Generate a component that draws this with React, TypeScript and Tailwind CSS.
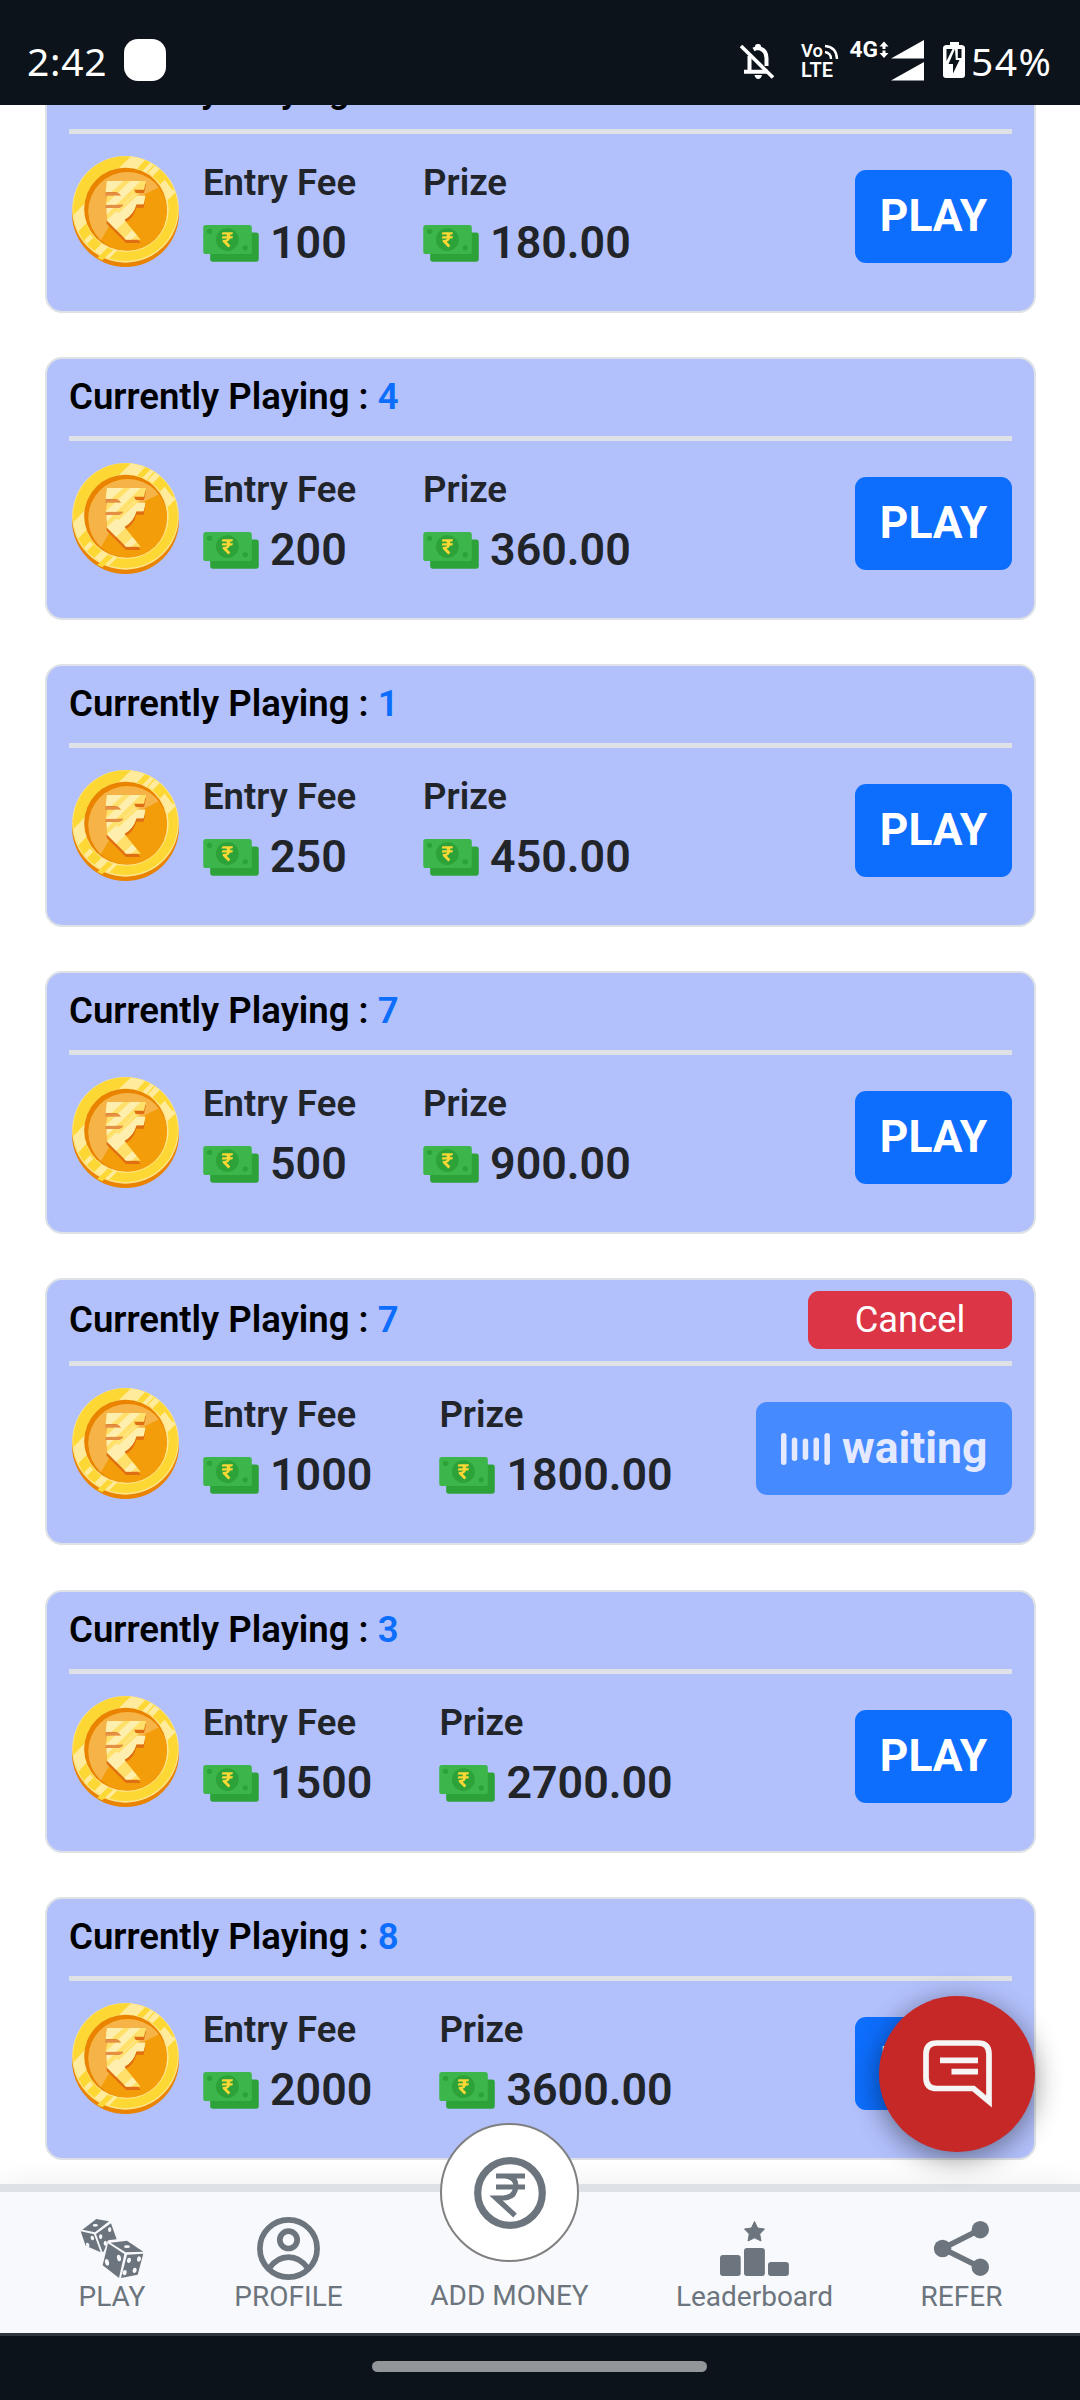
import React from "react";

type Game = { playing: number; fee: string; prize: string; waiting?: boolean };

const games: Game[] = [
  { playing: 2, fee: "100", prize: "180.00" },
  { playing: 4, fee: "200", prize: "360.00" },
  { playing: 1, fee: "250", prize: "450.00" },
  { playing: 7, fee: "500", prize: "900.00" },
  { playing: 7, fee: "1000", prize: "1800.00", waiting: true },
  { playing: 3, fee: "1500", prize: "2700.00" },
  { playing: 8, fee: "2000", prize: "3600.00" },
];

const RUPEE =
  "M139 114H256L250 140H220Q226 147 227 158H254L249 184H227Q219 216 191 230L240 290H196L138 232V195H176Q186 193 189 185H135L140 158H182Q177 149 166 147H135Z";

function Coin() {
  return (
    <svg viewBox="34 39 321 333" className="h-[111px] w-[107px] shrink-0">
      <defs>
        <clipPath id="coin-face">
          <circle cx="194.500" cy="197" r="157" />
        </clipPath>
        <clipPath id="coin-inner">
          <circle cx="201" cy="205" r="118" />
        </clipPath>
        <clipPath id="coin-rupee">
          <path d={RUPEE} />
        </clipPath>
      </defs>
      <ellipse cx="194.500" cy="211" rx="160.500" ry="161" fill="#e98300" />
      <circle cx="194.500" cy="199" r="160" fill="#fee58b" />
      <circle cx="194.500" cy="197" r="157" fill="#fdd835" />
      <g clipPath="url(#coin-face)" fill="#ffeb9b">
        <path d="M165 85L215 36L262 42L30 290V225Z" />
        <path d="M262 90L290 60L303 72L276 100Z" />
        <path d="M245 84L276 52L286 58L258 90Z" />
        <path d="M352 140L120 372L80 345L312 110L335 140Z" />
        <path d="M72 290L88 274L98 284L76 306Z" />
      </g>
      <path d="M110 345L145 310L160 318L125 352Z" fill="#fdd835" />
      <path d="M60 275L78 257L88 272L68 292Z" fill="#fdd835" />
      <circle cx="197" cy="200" r="127" fill="#ffe791" />
      <circle cx="194.500" cy="198" r="124" fill="#e98300" />
      <circle cx="201" cy="205" r="118" fill="#f49d0b" />
      <g clipPath="url(#coin-inner)">
        <path d="M80 80H310V125L180 190L110 310L80 290Z" fill="#f6b348" />
      </g>
      <path d={RUPEE} transform="translate(0 10)" fill="#df6f12" />
      <path d="M135 148H166Q178 150 181 158H135ZM135 186H189L178 195H135Z" fill="#e48f43" />
      <path d={RUPEE} fill="#ffe06b" />
      <g clipPath="url(#coin-rupee)" fill="#ffefae">
        <path d="M139 108H195L130 166Z" />
        <path d="M215 108H246L130 222V190Z" />
        <path d="M262 140L262 170L150 276L130 240L225 150Z" />
        <path d="M185 290L215 262L228 276L200 300Z" />
      </g>
      <path d="M166 207L228 150L236 152L174 210Z" fill="#ffe06b" />
    </svg>
  );
}

function Cash() {
  return (
    <svg viewBox="429 247 168 112" className="h-[37px] w-[56px] shrink-0">
      <rect x="450" y="270" width="147" height="88" rx="8" fill="#2ca238" />
      <rect x="429" y="247" width="147" height="88" rx="8" fill="#3cb54a" />
      <circle cx="502" cy="291" r="34.500" fill="#2ca238" />
      <circle cx="448" cy="266" r="8" fill="#2ca238" />
      <circle cx="556" cy="316" r="8" fill="#2ca238" />
      <path
        d="M487 269H519L517 276H510L511 281H519L517 288H510Q508 295 500 298L511 309L505 315L488 298V292Q500 293 502 288H485L487 281H501L499 276H485Z"
        fill="#fdd835"
      />
    </svg>
  );
}

function Amount({ label, value }: { label: string; value: string }) {
  return (
    <div className="flex flex-col text-[#212529]">
      <span className="text-[36.560px] leading-[44px] font-semibold">{label}</span>
      <div className="mt-[12px] flex h-[52px] items-center">
        <Cash />
        <span className="ml-[11px] text-[44.800px] leading-[52px] font-semibold">{value}</span>
      </div>
    </div>
  );
}

function GameCard({ game }: { game: Game }) {
  const size = game.waiting ? "h-[267px] mb-[45px]" : "h-[263px] mb-[44px]";
  const head = game.waiting ? "h-[81px]" : "h-[77px]";
  return (
    <section
      className={`${size} flex shrink-0 flex-col rounded-[17px] border-2 border-[#dee2e6] bg-[#b2c0fc] px-[22px]`}
    >
      <div className={`${head} flex shrink-0 items-center justify-between pb-[2px]`}>
        <h2 className="text-[36.560px] leading-[44px] font-semibold whitespace-pre text-black">
          Currently Playing : <span className="text-[#0d6efd]">{game.playing}</span>
        </h2>
        {game.waiting && (
          <button className="mt-[1px] h-[58px] w-[204px] rounded-[11px] bg-[#dc3545] text-[36.300px] leading-[56px] text-white">
            Cancel
          </button>
        )}
      </div>
      <div className="h-[5px] shrink-0 bg-[#dee2e6]" />
      <div className="flex items-start pt-[22px] pl-[3px]">
        <Coin />
        <div className="mt-[5px] ml-[24px] flex gap-[67px]">
          <Amount label="Entry Fee" value={game.fee} />
          <Amount label="Prize" value={game.prize} />
        </div>
        {game.waiting ? (
          <button className="mt-[14px] ml-auto flex h-[93px] w-[256px] items-center rounded-[11px] bg-[#468aff] pl-[25px] text-[#e4e9ff]">
            <svg viewBox="0 0 49 32" className="h-[32px] w-[49px]" fill="currentColor">
              <rect x="0" y="0" width="5.500" height="32" rx="2.700" />
              <rect x="10.800" y="4.500" width="5.500" height="23.500" rx="2.700" />
              <rect x="21.700" y="5.500" width="5.500" height="21.500" rx="2.700" />
              <rect x="32.500" y="4.500" width="5.500" height="23.500" rx="2.700" />
              <rect x="43.400" y="0" width="5.500" height="32" rx="2.700" />
            </svg>
            <span className="ml-[12px] pb-[2px] text-[44.500px] leading-[50px] font-bold">waiting</span>
          </button>
        ) : (
          <button className="mt-[14px] ml-auto h-[93px] w-[157px] rounded-[11px] bg-[#0d6efd] pb-[1px] text-[44.300px] leading-[50px] font-bold text-white">
            PLAY
          </button>
        )}
      </div>
    </section>
  );
}

function StatusBar() {
  return (
    <header className="relative z-10 flex h-[105px] shrink-0 items-start bg-[#0c131a] text-white">
      <span className="mt-[34px] ml-[27px] w-[97px] font-['Noto_Sans',sans-serif] text-[39px] leading-[54px] tracking-[0.700px]">2:42</span>
      <span className="mt-[39px] size-[42px] rounded-[14px] bg-white" />
      <svg viewBox="735 36 234 48" className="mt-[36px] ml-auto h-[48px] w-[234px]" fill="#fff">
        {/* muted bell */}
        <g fill="none" stroke="#fff">
          <path d="M749.500 72V56M753.500 49.500Q756 48 758.500 48Q766.500 50 766.500 58V66M744 71.800H768" strokeWidth="4" />
          <path d="M741 46L773 77.500" strokeWidth="3.600" />
        </g>
        <rect x="755" y="44" width="6" height="5" rx="2.500" />
        <path d="M754.500 75H762Q761 79 758.200 79Q755.500 79 754.500 75Z" />
        {/* VoLTE */}
        <g fontFamily="Roboto, sans-serif" fontWeight="600">
          <text x="801" y="57" fontSize="18.500" textLength="22" lengthAdjust="spacingAndGlyphs">Vo</text>
          <text x="801" y="76.500" fontSize="19.500" textLength="32" lengthAdjust="spacingAndGlyphs">LTE</text>
          <text x="849.500" y="57" fontSize="22" fontWeight="700" textLength="28.500" lengthAdjust="spacingAndGlyphs">4G</text>
        </g>
        <g fill="none" stroke="#fff" strokeWidth="2.400">
          <path d="M825 46Q836.500 47 837 59" />
          <path d="M825 52Q831 53 831 59" />
        </g>
        <path d="M884 41.500L888.500 46.500H885.500V49H882.500V46.500H879.500ZM884 58L888.500 53H885.500V50.500H882.500V53H879.500Z" />
        {/* signal strength, two SIMs */}
        <path d="M924 40V58.500H891ZM924 62V80.500H891Z" />
        {/* charging battery */}
        <path d="M950 42H959V45H962Q965 45.500 965 48V75Q965 78 962 78H946Q943 78 943 75V48Q943 45.500 946 45H950Z" />
        <path d="M946.500 49H952.500L946.500 61ZM957.800 49H961.500V58H957.800Z" fill="#0c131a" />
        <path d="M955 49L948.500 64H953V73.500L959.500 60H955.800Z" fill="#0c131a" />
      </svg>
      <span className="mt-[34px] mr-[24px] ml-[1px] w-[86px] pl-[1px] font-['Noto_Sans',sans-serif] text-[39px] leading-[54px] tracking-[1.500px]">54%</span>
    </header>
  );
}

function DiceIcon() {
  return (
    <svg viewBox="121 174 192 183" className="h-[61px] w-[64px]">
      <g fill="#6c757d">
        <path d="M128 209L170 177L208 184L166 217Z" />
        <path d="M123 214L163 223L183 277L138 257Z" />
        <path d="M169 222L214 190L231 238L205 241L192 275H188Z" />
        <path d="M212 248L262 242L311 275L258 277Z" />
        <path d="M205 250L254 282L238 354L189 316Z" />
        <path d="M262 284L311 281L294 344L244 354Z" />
      </g>
      <g fill="#f8f9fc">
        <ellipse cx="167" cy="196" rx="8" ry="4" />
        <ellipse cx="158" cy="234" rx="5" ry="7" transform="rotate(-20 158 234)" />
        <ellipse cx="144" cy="255" rx="5" ry="7" transform="rotate(-20 144 255)" />
        <ellipse cx="183" cy="230" rx="5" ry="7" />
        <ellipse cx="210" cy="209" rx="5" ry="7" />
        <ellipse cx="197" cy="250" rx="5" ry="8" />
        <ellipse cx="262" cy="260" rx="9" ry="4" />
        <ellipse cx="238" cy="294" rx="6" ry="10" transform="rotate(-12 238 294)" />
        <ellipse cx="202" cy="307" rx="6" ry="10" transform="rotate(-12 202 307)" />
        <ellipse cx="268" cy="301" rx="6" ry="8" transform="rotate(15 268 301)" />
        <ellipse cx="298" cy="297" rx="6" ry="8" transform="rotate(15 298 297)" />
        <ellipse cx="255" cy="338" rx="6" ry="8" transform="rotate(15 255 338)" />
        <ellipse cx="285" cy="331" rx="6" ry="8" transform="rotate(15 285 331)" />
      </g>
    </svg>
  );
}

function ProfileIcon() {
  return (
    <svg viewBox="0 0 63 63" className="size-[63px]" fill="none" stroke="#6c757d" strokeWidth="5.700">
      <circle cx="31.500" cy="31.500" r="28.600" />
      <circle cx="31.500" cy="22.800" r="8.700" />
      <path d="M12 51.500Q20 40.200 31.500 40.200Q43 40.200 51 51.500" />
    </svg>
  );
}

function LeaderboardIcon() {
  return (
    <svg viewBox="720 2221 69 55" className="h-[55px] w-[69px]" fill="#6c757d">
      <rect x="720" y="2255" width="20.700" height="21" rx="3" />
      <rect x="744" y="2248" width="20.900" height="28" rx="3" />
      <rect x="768" y="2262" width="20.900" height="14" rx="3" />
      <path
        d="M754.500 2221.500L757.600 2228L764.500 2229L759.700 2234L761 2241L754.500 2237.800L748 2241L749.300 2234L744.500 2229L751.400 2228Z"
        stroke="#6c757d"
        strokeWidth="1"
        strokeLinejoin="round"
      />
    </svg>
  );
}

function ShareIcon() {
  return (
    <svg viewBox="934 2221 55 55" className="size-[55px]" fill="#6c757d">
      <path d="M980.300 2229.600L942.600 2248.500L980.300 2267.300" fill="none" stroke="#6c757d" strokeWidth="5.600" />
      <circle cx="942.600" cy="2248.500" r="8.700" />
      <circle cx="980.300" cy="2229.700" r="8.700" />
      <circle cx="980.300" cy="2267.200" r="8.700" />
    </svg>
  );
}

function NavItem({ label, width, children }: { label: string; width: string; children: React.ReactNode }) {
  return (
    <a className={`${width} flex shrink-0 flex-col items-center`}>
      <span className="flex h-[89px] items-center justify-center pt-[24px]">{children}</span>
      <span className="text-[28px] leading-[32px] whitespace-nowrap">{label}</span>
    </a>
  );
}

function BottomNav() {
  return (
    <nav className="relative z-10 flex h-[149px] shrink-0 border-t-8 border-[#dee2e6] bg-[#f8f9fc] text-[#6c757d] shadow-[0_0_32px_rgba(0,0,0,0.07)]">
      <NavItem label="PLAY" width="w-[224px]">
        <DiceIcon />
      </NavItem>
      <NavItem label="PROFILE" width="w-[129px]">
        <ProfileIcon />
      </NavItem>
      <div className="relative flex w-[313px] shrink-0 flex-col items-center">
        <div className="absolute -top-[69px] flex size-[139px] items-center justify-center rounded-full border-2 border-[#808080] bg-white">
          <svg viewBox="0 0 72 72" className="size-[72px]" fill="none" stroke="#6c757d">
            <circle cx="36" cy="36" r="32.300" strokeWidth="7.200" />
            <path d="M22 19H51M22 30H51M31 19Q42 20 42 29Q41 41 29 41H22L41 58.500" strokeWidth="5.200" />
          </svg>
        </div>
        <span className="mt-[88px] text-[28px] leading-[32px] whitespace-nowrap">ADD MONEY</span>
      </div>
      <NavItem label="Leaderboard" width="w-[177px]">
        <LeaderboardIcon />
      </NavItem>
      <NavItem label="REFER" width="w-[237px]">
        <ShareIcon />
      </NavItem>
    </nav>
  );
}

function ChatButton() {
  return (
    <button className="absolute top-[1996px] left-[879px] z-20 flex size-[156px] items-center justify-center rounded-full bg-[#c62828] shadow-[0_6px_28px_rgba(0,0,0,0.45)]">
      <svg viewBox="879 1996 156 156" className="size-[156px]" fill="none" stroke="#f5f5f5" strokeWidth="5.700">
        <path d="M989 2101.500V2054Q989 2043 978 2043H937Q926 2043 926 2054V2077.500Q926 2088.500 937 2088.500H973.500Z" />
        <path d="M940 2060.300H978M951.500 2071.700H978" />
      </svg>
    </button>
  );
}

export default function App() {
  return (
    <div className="relative flex h-[2400px] w-[1080px] flex-col overflow-hidden bg-white font-['Roboto',sans-serif]">
      <StatusBar />
      <main className="h-[2079px] shrink-0 overflow-hidden pr-[44px] pl-[45px]">
        <div className="-mt-[55px] flex flex-col">
          {games.map((game) => (
            <GameCard key={game.fee} game={game} />
          ))}
        </div>
      </main>
      <BottomNav />
      <ChatButton />
      <footer className="relative z-10 flex h-[67px] shrink-0 border-t-[3px] border-[#2f373e] bg-[#0c131a] pt-[25px] pl-[372px]">
        <div className="h-[11px] w-[335px] rounded-full bg-[#929699]" />
      </footer>
    </div>
  );
}
